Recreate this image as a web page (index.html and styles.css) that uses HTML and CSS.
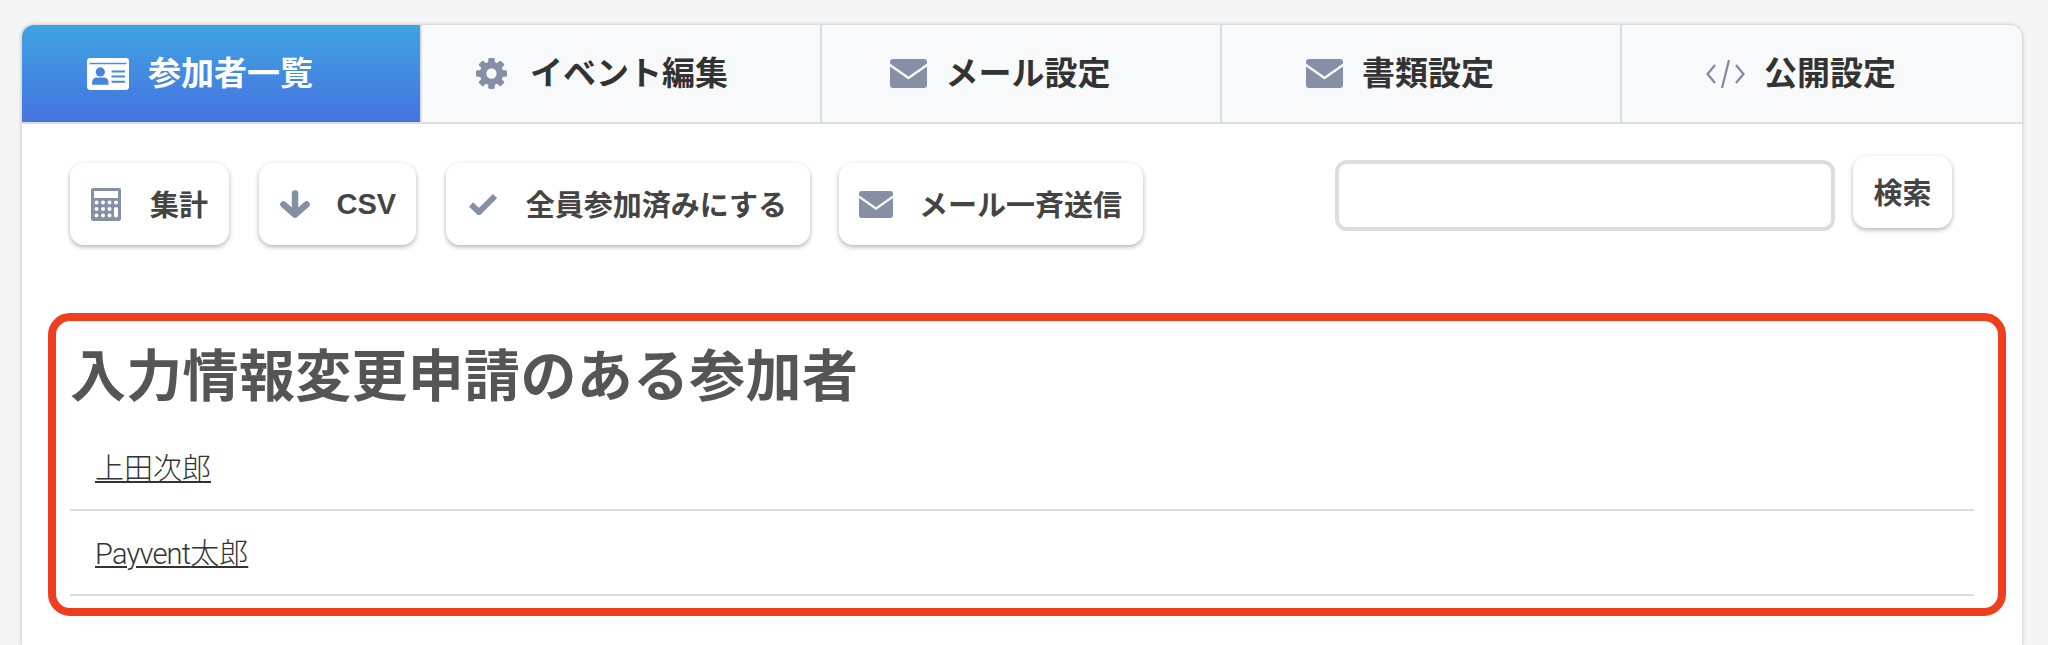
FILE: index.html
```html
<!DOCTYPE html>
<html lang="ja">
<head>
    <meta charset="UTF-8">
    <meta name="viewport" content="width=device-width, initial-scale=1.0">
    <title>参加者一覧</title>
    <link rel="stylesheet" href="styles.css">
</head>
<body>

    <svg class="icon-defs" width="0" height="0">
        <symbol id="icon-mail" viewBox="0 0 37 29" preserveAspectRatio="none">
            <path d="M3 0h31a3 3 0 0 1 3 3v1.500L18.500 17.500 0 4.500V3a3 3 0 0 1 3-3z"/>
            <path d="M0 7.500l18.500 13L37 7.500V26a3 3 0 0 1-3 3H3a3 3 0 0 1-3-3z"/>
        </symbol>
    </svg>

    <div class="card">
        <nav class="tabs">
            <a class="tab active" href="#">
                <svg class="tab-icon" width="42" height="32" viewBox="0 0 41 31">
                    <path fill="#fff" fill-rule="evenodd" d="M3 0h35a3 3 0 0 1 3 3v25a3 3 0 0 1-3 3H3a3 3 0 0 1-3-3V3a3 3 0 0 1 3-3zM2.500 4.500v1.500h36V4.500zM24 12v2h13v-2zM24 17v2h13v-2zM24 22v2h13v-2z"/>
                    <circle cx="13" cy="13.500" r="4.500" fill="#4585e0"/>
                    <path fill="#4585e0" d="M5 26v-3a5 5 0 0 1 5-4h6a5 5 0 0 1 5 4v3z"/>
                </svg>
                <span>参加者一覧</span>
            </a>
            <a class="tab tab-kana" href="#">
                <svg class="tab-icon" width="33" height="31" viewBox="0 0 33 33">
                    <g fill="#858fa5">
                        <rect x="13" y="0" width="7" height="33" rx="1.500"/>
                        <rect x="13" y="0" width="7" height="33" rx="1.500" transform="rotate(45 16.500 16.500)"/>
                        <rect x="13" y="0" width="7" height="33" rx="1.500" transform="rotate(90 16.500 16.500)"/>
                        <rect x="13" y="0" width="7" height="33" rx="1.500" transform="rotate(135 16.500 16.500)"/>
                    </g>
                    <circle cx="16.500" cy="16.500" r="9" fill="#f8f9fb" stroke="#858fa5" stroke-width="7"/>
                </svg>
                <span>イベント編集</span>
            </a>
            <a class="tab" href="#">
                <svg class="tab-icon mail" width="37" height="29"><use href="#icon-mail"/></svg>
                <span>メール設定</span>
            </a>
            <a class="tab" href="#">
                <svg class="tab-icon mail" width="37" height="29"><use href="#icon-mail"/></svg>
                <span>書類設定</span>
            </a>
            <a class="tab" href="#">
                <svg class="tab-icon" width="39" height="28" viewBox="0 0 39 28" fill="none" stroke="#7d88a3" stroke-width="2.200">
                    <path d="M9 5L1.500 14 9 23"/>
                    <path d="M30 5l7.500 9L30 23"/>
                    <path d="M23 0L16 28"/>
                </svg>
                <span>公開設定</span>
            </a>
        </nav>

        <div class="toolbar">
            <div class="actions">
                <a class="btn" href="#">
                    <svg width="30" height="33" viewBox="0 0 30 33">
                        <rect width="30" height="33" rx="2" fill="#858fa5"/>
                        <rect x="3" y="3" width="24" height="7" fill="#fff"/>
                        <g fill="#fff">
                            <circle cx="5.500" cy="14.500" r="2"/><circle cx="12" cy="14.500" r="2"/><circle cx="18.500" cy="14.500" r="2"/><circle cx="25" cy="14.500" r="2"/>
                            <circle cx="5.500" cy="21" r="2"/><circle cx="12" cy="21" r="2"/><circle cx="18.500" cy="21" r="2"/>
                            <circle cx="5.500" cy="27.500" r="2"/><circle cx="12" cy="27.500" r="2"/><circle cx="18.500" cy="27.500" r="2"/>
                            <rect x="23" y="19" width="4" height="10.500" rx="2"/>
                        </g>
                    </svg>
                    <span>集計</span>
                </a>
                <a class="btn btn-csv" href="#">
                    <svg width="30" height="28" viewBox="0 0 30 28" fill="none" stroke="#858fa5" stroke-width="6.500" stroke-linecap="round" stroke-linejoin="round">
                        <path d="M15 3.500v20"/>
                        <path d="M3.500 14.500L15 24.500l11.500-10"/>
                    </svg>
                    <span class="btn-latin">CSV</span>
                </a>
                <a class="btn btn-check" href="#">
                    <svg width="28" height="22" viewBox="0 0 28 22" fill="none" stroke="#858fa5" stroke-width="6">
                        <path d="M2 11.500L10 19 26 3"/>
                    </svg>
                    <span>全員参加済みにする</span>
                </a>
                <a class="btn btn-mail" href="#">
                    <svg class="mail" width="34" height="27"><use href="#icon-mail"/></svg>
                    <span>メール一斉送信</span>
                </a>
            </div>
            <form class="search">
                <input class="search-input" type="text">
                <button class="search-btn" type="button">検索</button>
            </form>
        </div>

        <section class="requests">
            <h2 class="requests-title">入力情報変更申請のある参加者</h2>
            <div class="request-row"><a href="#">上田次郎</a></div>
            <div class="request-row"><a href="#"><span class="latin">Payvent</span>太郎</a></div>
        </section>
    </div>

</body>
</html>
```

FILE: styles.css
```css
* {
    box-sizing: border-box;
}
html, body {
    height: 100%;
    overflow: hidden;
}
body {
    margin: 0;
    padding: 25px 26px 0 22px;
    background: #f5f5f5;
    color: #333;
    font-family: "Liberation Sans", "Noto Sans CJK JP", sans-serif;
}
a {
    color: inherit;
    text-decoration: none;
}
.icon-defs {
    position: absolute;
}
.mail {
    fill: #858fa5;
}

.card {
    height: 100%;
    background: #fff;
    border-radius: 12px 12px 0 0;
    box-shadow: 0 0 4px rgba(0, 0, 0, 0.25);
}

.tabs {
    display: flex;
    height: 99px;
    border-bottom: 2px solid #ddd;
}
.tab {
    flex: none;
    width: 400px;
    display: flex;
    align-items: center;
    justify-content: center;
    gap: 19px;
    padding-right: 42px;
    background: #f8f9fb;
    border-left: 2px solid #ddd;
    font-size: 33px;
    font-weight: 700;
}
.tab span {
    margin-bottom: 5px;
}
.tab:last-child {
    flex: 1;
    border-radius: 0 12px 0 0;
}
.tab.active {
    width: 398px;
    background: linear-gradient(#3fa3e2, #4673e0);
    border-left: none;
    border-radius: 12px 0 0 0;
    color: #fff;
}
.tab-kana {
    gap: 22px;
    padding-right: 39px;
}
.tab-icon {
    flex: none;
}

.toolbar {
    display: flex;
    justify-content: space-between;
    align-items: flex-start;
    padding: 39px 70px 0 48px;
}
.actions {
    display: flex;
    gap: 29.500px;
}
.btn {
    display: flex;
    align-items: center;
    gap: 29px;
    height: 82px;
    padding: 0 21px;
    background: #fff;
    border-radius: 14px;
    box-shadow: 0 2px 5px rgba(0, 0, 0, 0.3);
    color: #444;
    font-size: 29px;
    font-weight: 700;
}
.btn span {
    margin-bottom: 3px;
}
.btn svg {
    flex: none;
}
.btn-csv {
    gap: 27px;
    padding: 0 20px 0 21px;
}
.btn .btn-latin {
    font-size: 29px;
    margin-bottom: 0;
}
.btn-check {
    padding: 0 23px;
}
.btn-mail {
    gap: 26px;
    padding: 0 21px 0 19.500px;
}
.search {
    display: flex;
    align-items: flex-start;
    gap: 18px;
    margin-top: -7px;
}
.search-input {
    width: 500px;
    height: 71px;
    margin-top: 4px;
    border: 4px solid #ddd;
    border-radius: 12px;
    background: #fff;
}
.search-btn {
    width: 99px;
    height: 72px;
    padding: 0 0 3px;
    border: none;
    background: #fff;
    border-radius: 14px;
    box-shadow: 0 2px 5px rgba(0, 0, 0, 0.3);
    color: #444;
    font-family: inherit;
    font-size: 29px;
    font-weight: 700;
}

.requests {
    height: 303px;
    margin: 68px 16px 0 26px;
    padding: 0 24px 0 14px;
    border: 8px solid #ee3e1e;
    border-radius: 22px;
}
.requests-title {
    height: 105px;
    margin: 0;
    color: #555;
    font-size: 56px;
    font-weight: 700;
    letter-spacing: 0.300px;
    line-height: 112px;
}
.request-row {
    height: 85px;
    padding-left: 25px;
    border-bottom: 2px solid #ddd;
    font-family: Roboto, "Noto Sans CJK JP", sans-serif;
    font-size: 29px;
    font-weight: 300;
    line-height: 86px;
}
.request-row a {
    text-decoration: underline;
}
.latin {
    letter-spacing: -0.800px;
}
```
